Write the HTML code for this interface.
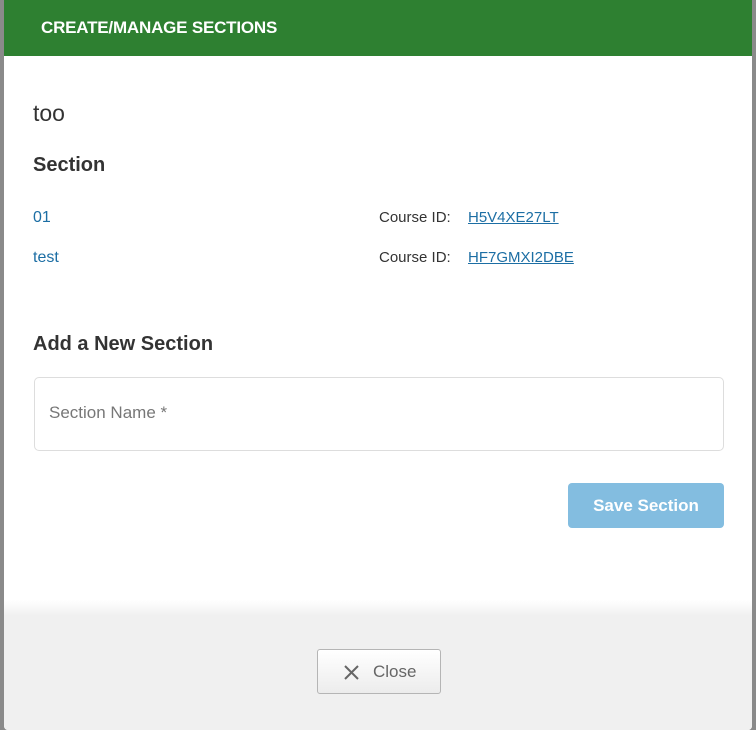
<!DOCTYPE html>
<html><head><meta charset="utf-8"><style>
*{margin:0;padding:0;box-sizing:border-box}
body{width:756px;height:730px;overflow:hidden;background:#8a8a8a;font-family:"Liberation Sans",sans-serif;position:relative}
.modal{position:absolute;left:4px;top:0;width:748px;height:730px;background:#fff;border-radius:0 0 4px 4px;overflow:hidden}
.hdr{height:56px;background:#2e8031;color:#fff;font-weight:bold;font-size:17px;padding:18px 0 0 37px;letter-spacing:-0.2px}
.t{position:absolute;color:#333}
a{color:#1c6ea4;text-decoration:underline;position:absolute;left:89px;top:0}
.footer{position:absolute;left:0;top:600px;width:748px;height:130px;background:linear-gradient(#fff 0,#f0f0f0 16px,#f0f0f0 100%)}
</style></head><body>
<div class="modal">
<div class="hdr">CREATE/MANAGE SECTIONS</div>
<div class="t" style="left:29px;top:100px;font-size:23px">too</div>
<div class="t" style="left:29px;top:154px;font-size:20px;font-weight:bold">Section</div>
<div class="t" style="left:29px;top:209px;font-size:16px;color:#1c6ea4">01</div>
<div class="t" style="left:29px;top:249px;font-size:16px;color:#1c6ea4">test</div>
<div class="t" style="left:375px;top:209px;font-size:15px;width:250px">Course ID:<a>H5V4XE27LT</a></div>
<div class="t" style="left:375px;top:249px;font-size:15px;width:250px">Course ID:<a>HF7GMXI2DBE</a></div>
<div class="t" style="left:29px;top:333px;font-size:20px;font-weight:bold">Add a New Section</div>
<div style="position:absolute;left:30px;top:377px;width:690px;height:74px;border:1px solid #ddd;border-radius:5px;padding:25px 0 0 14px;font-size:17px;color:#777">Section Name *</div>
<div style="position:absolute;left:564px;top:483px;width:156px;height:45px;background:#83bde0;border-radius:4px;color:#fff;font-weight:bold;font-size:17px;text-align:center;line-height:45px">Save Section</div>
<div class="footer">
<div style="position:absolute;left:313px;top:49px;width:124px;height:45px;border:1px solid #b5b5b5;border-radius:3px;background:linear-gradient(#fff,#ececec);color:#666;font-size:17px;line-height:43px">
<svg style="position:absolute;left:25px;top:14px" width="17" height="17" viewBox="0 0 17 17"><path d="M2 2L15 15M15 2L2 15" stroke="#666" stroke-width="2"/></svg>
<span style="position:absolute;left:55px">Close</span></div>
</div>
</div>
</body></html>
